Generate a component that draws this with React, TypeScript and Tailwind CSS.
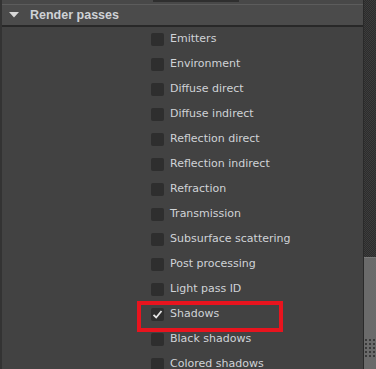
import React from "react";

const items: { label: string; checked?: boolean; highlight?: boolean }[] = [
  { label: "Emitters" },
  { label: "Environment" },
  { label: "Diffuse direct" },
  { label: "Diffuse indirect" },
  { label: "Reflection direct" },
  { label: "Reflection indirect" },
  { label: "Refraction" },
  { label: "Transmission" },
  { label: "Subsurface scattering" },
  { label: "Post processing" },
  { label: "Light pass ID" },
  { label: "Shadows", checked: true, highlight: true },
  { label: "Black shadows" },
  { label: "Colored shadows" },
];

function Check({ checked }: { checked?: boolean }) {
  return (
    <div className="w-[13px] h-[13px] rounded-[2px] bg-[#2e2e2e] flex items-center justify-center shrink-0">
      {checked && (
        <svg width="11" height="11" viewBox="0 0 11 11">
          <path d="M1.5 5.8 L4.2 8.5 L9.5 2" stroke="#e6e6e6" strokeWidth="1.8" fill="none" />
        </svg>
      )}
    </div>
  );
}

export default function App() {
  return (
    <div className="w-[376px] h-[369px] overflow-hidden flex bg-[#424242]" style={{ fontFamily: "'DejaVu Sans', sans-serif" }}>
      <div className="flex-1 flex flex-col border-l-2 border-[#333333] overflow-hidden">
        <div className="h-[4px] shrink-0 bg-[#484848] flex">
          <div className="ml-[151px] w-[86px] h-[2px] bg-[#2f2f2f]" />
        </div>
        <div className="h-[23px] shrink-0 bg-[#4b4b4b] border-t border-[#5c5c5c] border-b-2 border-b-[#282828] flex items-center">
          <svg width="10" height="6" viewBox="0 0 10 6" className="ml-[7px]">
            <path d="M0 0 L10 0 L5 5.5 Z" fill="#d8d8d8" />
          </svg>
          <span
            className="ml-[11px] text-[12.5px] font-bold text-[#cfd2d6] leading-none"
            style={{ fontFamily: "'Liberation Sans', sans-serif" }}
          >
            Render passes
          </span>
        </div>
        <div className="flex flex-col shrink-0">
          {items.map((it) => (
            <div key={it.label} className="h-[25px] shrink-0 flex items-center pl-[149px]">
              {it.highlight ? (
                <div className="-ml-[14px] mt-[4px] h-[31px] w-[146px] border-[4px] border-[#e8141e] flex items-center pl-[10px] pb-[4px] gap-[6px]">
                  <Check checked={it.checked} />
                  <span className="text-[11px] text-[#d0d3d7]">{it.label}</span>
                </div>
              ) : (
                <div className="flex items-center gap-[6px]">
                  <Check checked={it.checked} />
                  <span className="text-[11px] text-[#d0d3d7]">{it.label}</span>
                </div>
              )}
            </div>
          ))}
        </div>
      </div>
      <div className="w-[13px] shrink-0 flex flex-col border-l border-[#2a2a2a]">
        <div className="h-[257px] shrink-0 bg-[repeating-conic-gradient(#2c2c2c_0_25%,#3c3c3c_0_50%)] bg-[length:2px_2px]" />
        <div className="flex-1 bg-[#6a6a6a] border-t border-[#7a7a7a] flex flex-col items-center justify-end pb-[12px]">
          <div className="grid grid-cols-3 gap-[2px]">
            {Array.from({ length: 15 }).map((_, i) => (
              <div key={i} className="w-[2px] h-[2px] bg-[#3a3a3a]" />
            ))}
          </div>
        </div>
      </div>
    </div>
  );
}
